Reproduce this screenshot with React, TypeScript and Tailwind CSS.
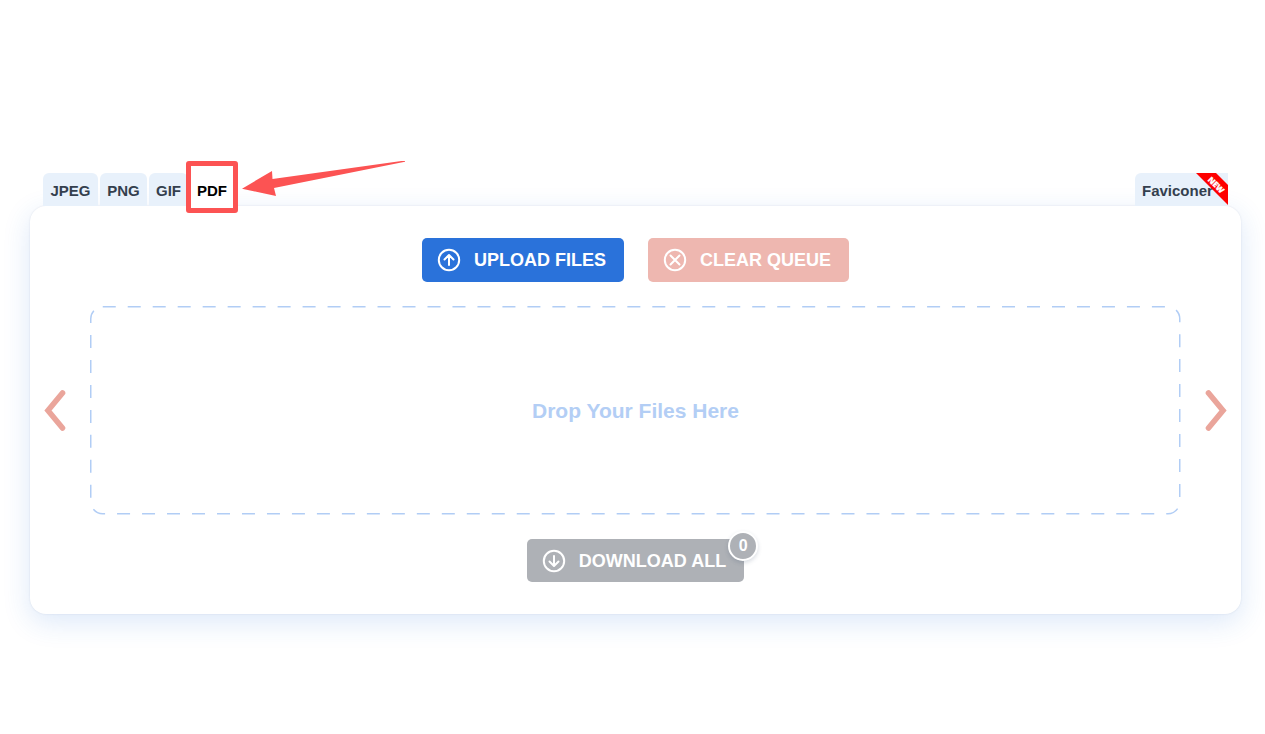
import type { ReactNode } from 'react'

const formatTabs = [
  { title: 'JPEG', width: 'w-[55px]', active: false },
  { title: 'PNG', width: 'w-[47px]', active: false },
  { title: 'GIF', width: 'w-[39px]', active: false },
  { title: 'PDF', width: 'w-[44px]', active: true },
]

const CircleIcon = ({ children }: { children: ReactNode }) => (
  <svg
    width="24"
    height="24"
    viewBox="0 0 24 24"
    fill="none"
    stroke="currentColor"
    strokeWidth="2"
    strokeLinecap="round"
    strokeLinejoin="round"
    aria-hidden="true"
  >
    <circle cx="12" cy="12" r="10.2" />
    {children}
  </svg>
)

const Chevron = ({ d }: { d: string }) => (
  <svg width="22" height="42" viewBox="0 0 22 42" fill="none" stroke="#eaa59b" strokeWidth="5.6" strokeLinecap="round" aria-hidden="true">
    <path d={d} />
  </svg>
)

const Tabs = () => {
  return (
    <div className="relative z-10 flex justify-between px-[13px] text-[15px] leading-5 font-bold text-[#343f4e]">
      <div className="flex gap-[2px]">
        {formatTabs.map((tab) => (
          <a
            key={tab.title}
            href="#"
            className={`relative h-[33px] rounded-t-md pt-2 text-center ${tab.width} ${tab.active ? 'bg-white text-black' : 'bg-[#e8f1fb]'}`}
          >
            {tab.title}
            {tab.active && (
              <>
                <span className="absolute -top-3 -left-1 h-[52px] w-[52px] rounded-[3px] border-5 border-[#fc5353]" />
                <svg className="absolute -top-3 left-[52px]" width="164" height="36" viewBox="0 0 164 36" fill="#fc5353" aria-hidden="true">
                  <path d="M0 27.7L30 10L30.5 18L163 -0.5L163 0.8L32 27L34 35Z" />
                </svg>
              </>
            )}
          </a>
        ))}
      </div>
      <a href="#" className="relative h-[33px] w-[93px] rounded-tl-md bg-[#e8f1fb] pt-2 pl-[7px]">
        Faviconer
        <svg className="absolute top-0 right-0" width="32" height="32" viewBox="0 0 32 32">
          <path d="M0 0H20L32 12V32Z" fill="#fe0000" />
          <text
            transform="translate(20 12) rotate(45)"
            textAnchor="middle"
            y="2.8"
            fill="#fff"
            stroke="#fff"
            strokeWidth="0.3"
            className="font-['Open_Sans',sans-serif] text-[8px] font-extrabold"
          >
            NEW
          </text>
        </svg>
      </a>
    </div>
  )
}

const DropZone = () => {
  return (
    <div className="my-6 flex items-center">
      <button type="button" aria-label="Previous" className="flex w-[60px] shrink-0 justify-center pr-[10px]">
        <Chevron d="M18.5 3L4 20.5L18.5 38" />
      </button>
      <div className="relative flex h-[209px] flex-1 items-center justify-center">
        <svg className="absolute inset-0 h-full w-full" fill="none" aria-hidden="true">
          <rect
            x="0.75"
            y="0.75"
            rx="12"
            className="h-[calc(100%-2px)] w-[calc(100%-2px)]"
            stroke="#b1cdf5"
            strokeWidth="1.5"
            strokeDasharray="13 11.98"
          />
        </svg>
        <p className="text-[21px] leading-7 font-bold text-[#b3cef5]">Drop Your Files Here</p>
      </div>
      <button type="button" aria-label="Next" className="flex w-[60px] shrink-0 justify-center pl-[10px]">
        <Chevron d="M3.5 3L18 20.5L3.5 38" />
      </button>
    </div>
  )
}

export default function App() {
  return (
    <div className="min-h-screen bg-white pt-[173px] pr-6 pl-[30px] font-['Liberation_Sans',Arial,sans-serif]">
      <div>
        <Tabs />
        <main className="rounded-2xl bg-white py-8 shadow-[0_0_2px_rgba(40,60,100,0.12),0_8px_28px_rgba(40,115,220,0.16)]">
          <div className="flex justify-center gap-6 text-lg font-bold text-white">
            <button type="button" className="flex h-11 items-center gap-[13px] rounded-[5px] bg-[#2a72da] pr-[18px] pl-[15px]">
              <CircleIcon>
                <path d="M12 17V7.5M7.5 11.5L12 7L16.5 11.5" />
              </CircleIcon>
              UPLOAD FILES
            </button>
            <button type="button" className="flex h-11 items-center gap-[13px] rounded-[5px] bg-[#eeb7b0] pr-[18px] pl-[15px]">
              <CircleIcon>
                <path d="M7.5 7.5L16.5 16.5M16.5 7.5L7.5 16.5" />
              </CircleIcon>
              CLEAR QUEUE
            </button>
          </div>
          <DropZone />
          <div className="flex justify-center">
            <button type="button" className="relative flex h-[43px] items-center gap-[13px] rounded-[5px] bg-[#aeb1b6] pr-[18px] pl-[15px] text-lg font-bold text-white">
              <CircleIcon>
                <path d="M12 7V16.5M7.5 12.5L12 17L16.5 12.5" />
              </CircleIcon>
              DOWNLOAD ALL
              <span className="absolute -top-2 -right-[14px] flex h-[30px] w-[30px] items-center justify-center rounded-full border-2 border-white bg-[#aeb1b6] text-base shadow-[0_2px_4px_rgba(60,80,110,0.2)]">
                0
              </span>
            </button>
          </div>
        </main>
      </div>
    </div>
  )
}
